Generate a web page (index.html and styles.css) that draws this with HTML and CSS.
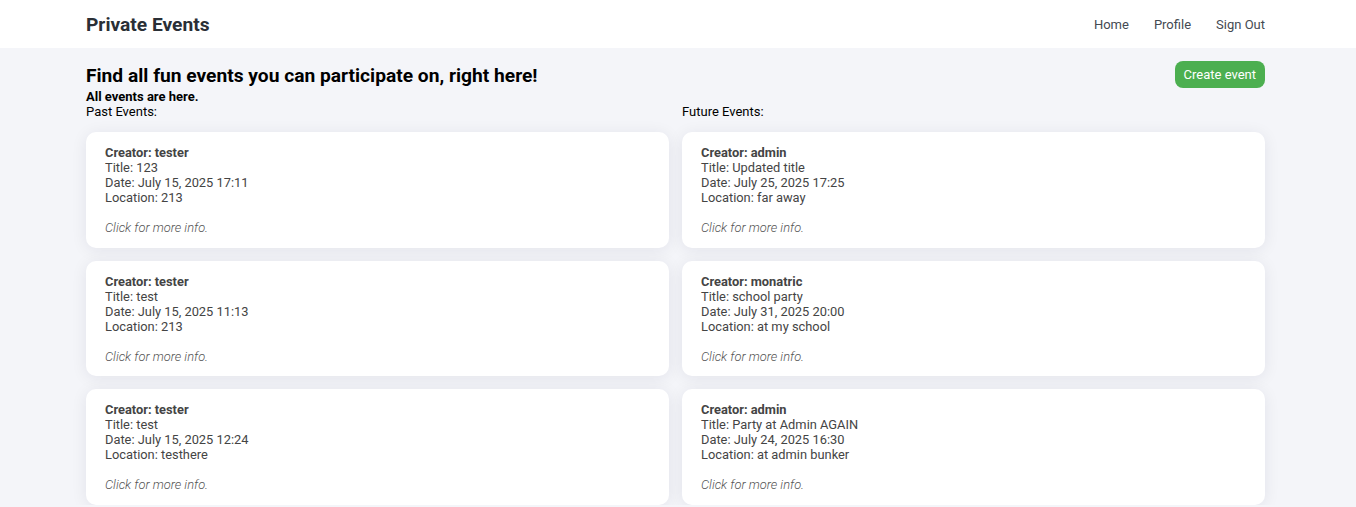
FILE: index.html
```html
<!DOCTYPE html>
<html lang="en">
<head>
<meta charset="utf-8">
<title>Private Events</title>
<link rel="stylesheet" href="styles.css">
</head>
<body>
<header class="navbar">
  <div class="nav-inner">
    <div class="brand">Private Events</div>
    <nav class="nav-links">
      <a href="#">Home</a>
      <a href="#">Profile</a>
      <a href="#">Sign Out</a>
    </nav>
  </div>
</header>
<main class="container">
  <div class="top-row">
    <div class="intro">
      <h1 class="headline">Find all fun events you can participate on, right here!</h1>
      <p class="subline">All events are here.</p>
    </div>
    <a class="btn-create" href="#">Create event</a>
  </div>
  <div class="columns">
    <section class="column">
      <div class="col-label">Past Events:</div>
      <div class="card">
        <div class="creator">Creator: tester</div>
        <div>Title: 123</div>
        <div>Date: July 15, 2025 17:11</div>
        <div>Location: 213</div>
        <div class="more">Click for more info.</div>
      </div>
      <div class="card">
        <div class="creator">Creator: tester</div>
        <div>Title: test</div>
        <div>Date: July 15, 2025 11:13</div>
        <div>Location: 213</div>
        <div class="more">Click for more info.</div>
      </div>
      <div class="card">
        <div class="creator">Creator: tester</div>
        <div>Title: test</div>
        <div>Date: July 15, 2025 12:24</div>
        <div>Location: testhere</div>
        <div class="more">Click for more info.</div>
      </div>
    </section>
    <section class="column">
      <div class="col-label">Future Events:</div>
      <div class="card">
        <div class="creator">Creator: admin</div>
        <div>Title: Updated title</div>
        <div>Date: July 25, 2025 17:25</div>
        <div>Location: far away</div>
        <div class="more">Click for more info.</div>
      </div>
      <div class="card">
        <div class="creator">Creator: monatric</div>
        <div>Title: school party</div>
        <div>Date: July 31, 2025 20:00</div>
        <div>Location: at my school</div>
        <div class="more">Click for more info.</div>
      </div>
      <div class="card">
        <div class="creator">Creator: admin</div>
        <div>Title: Party at Admin AGAIN</div>
        <div>Date: July 24, 2025 16:30</div>
        <div>Location: at admin bunker</div>
        <div class="more">Click for more info.</div>
      </div>
    </section>
  </div>
</main>
</body>
</html>
```
FILE: styles.css
```css
* { box-sizing: border-box; }
html, body { margin: 0; padding: 0; }
body {
  font-family: Roboto, "Liberation Sans", Arial, sans-serif;
  background: #f4f5f9;
  color: #000;
  font-size: 13px;
}
.navbar {
  background: #ffffff;
  height: 48px;
}
.nav-inner {
  width: 1179px;
  margin-left: 86px;
  height: 48px;
  display: flex;
  align-items: center;
  justify-content: space-between;
}
.brand {
  font-size: 19.2px;
  font-weight: 700;
  color: #2a2f36;
  padding-top: 1px;
}
.nav-links {
  display: flex;
  gap: 25px;
}
.nav-links a {
  color: #444a52;
  text-decoration: none;
  font-size: 13px;
}
.container {
  width: 1179px;
  margin-left: 86px;
}
.top-row {
  display: flex;
  justify-content: space-between;
  align-items: flex-start;
  padding-top: 13px;
}
.headline {
  margin: 0;
  font-size: 19.2px;
  font-weight: 700;
  line-height: 24px;
  padding-top: 3px;
}
.subline {
  margin: 0;
  font-size: 13px;
  font-weight: 700;
  line-height: 15px;
  padding-top: 1px;
}
.btn-create {
  display: block;
  background: #4caf50;
  color: #fff;
  text-decoration: none;
  font-size: 13px;
  line-height: 28px;
  height: 27px;
  padding: 0 9px;
  border-radius: 8px;
}
.columns {
  display: grid;
  grid-template-columns: 1fr 1fr;
  column-gap: 13px;
}
.column {
  display: flex;
  flex-direction: column;
  gap: 13px;
}
.col-label {
  line-height: 15px;
  margin-top: 0;
  margin-bottom: 0;
}
.card {
  background: #fff;
  border-radius: 10px;
  padding: 13px 19px 12.5px;
  font-size: 12.85px;
  line-height: 15px;
  color: #444;
  box-shadow: 0 2px 16px rgba(20, 30, 60, 0.08);
}
.creator { font-weight: 700; }
.more {
  margin-top: 15px;
  font-style: italic;
  font-weight: 300;
  color: #555;
}
```
